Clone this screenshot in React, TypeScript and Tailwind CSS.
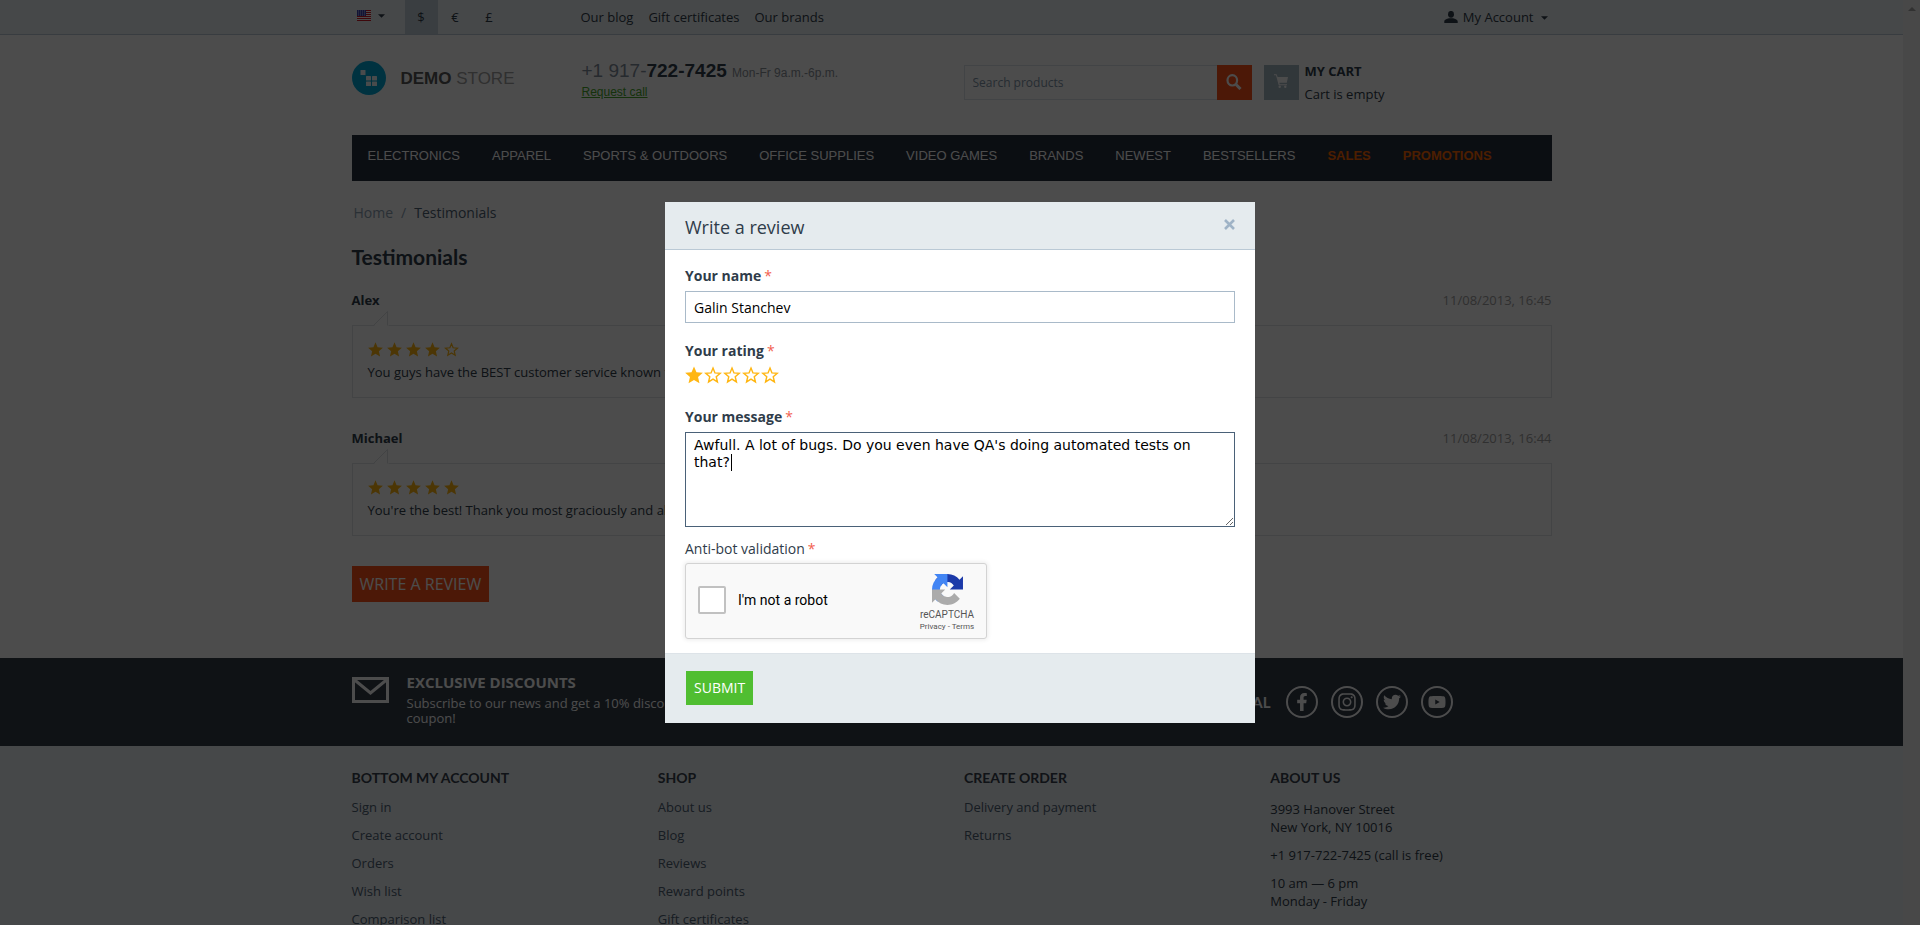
import React from "react";
import { FaFacebookF, FaInstagram, FaTwitter, FaYoutube } from "react-icons/fa";

const STAR = "12,.5 15.3,8.2 23.8,9 17.4,14.6 19.3,23 12,18.600 4.700,23 6.600,14.600 .2,9 8.700,8.200";

function Star({ filled, className }: { filled: boolean; className: string }) {
  return (
    <svg viewBox="0 0 24 24" className={className} aria-hidden="true">
      {filled ? (
        <polygon points={STAR} fill="#ffb612" />
      ) : (
        <polygon
          points="12,2.800 14.600,9.200 21.600,9.800 16.300,14.300 17.900,21.200 12,17.600 6.100,21.200 7.700,14.300 2.400,9.800 9.400,9.200"
          fill="none"
          stroke="#ffb612"
          strokeWidth="1.900"
        />
      )}
    </svg>
  );
}

function CaretDown() {
  return (
    <svg viewBox="0 0 8 4" className="h-1 w-[7px] fill-[#2f3c4a]" aria-hidden="true">
      <path d="M0 0h8L4 4z" />
    </svg>
  );
}

function Flag() {
  return (
    <svg viewBox="0 0 14 11" className="h-[11px] w-3.5" aria-label="English">
      <rect width="14" height="11" fill="#fff" />
      {[0, 2, 4, 6, 8, 10].map((y) => (
        <rect key={y} y={y} width="14" height="1" fill="#d01c2b" />
      ))}
      <rect width="9" height="6" fill="#3c45b5" />
      {[1, 3, 5].map((y) =>
        [1, 3, 5, 7].map((x) => <rect key={`${x}-${y}`} x={x} y={y - 0.5} width="1" height="1" fill="#c9cdf0" />)
      )}
    </svg>
  );
}

function TopBar() {
  return (
    <div className="border-b border-[#bccad6] bg-[#ebf0f3]">
      <div className="mx-auto grid h-[34px] max-w-[1200px] grid-cols-[229px_1fr_auto] items-center text-[13px] text-[#2f3c4a]">
        <div className="flex h-full items-center gap-px">
          <button className="flex w-[52px] items-center gap-[7px] pb-[3px] pl-[5px]" aria-label="Language">
            <Flag />
            <CaretDown />
          </button>
          <button className="h-full w-[33px] bg-[#c3d1da] pt-0.5">$</button>
          <button className="h-full w-[33px] pt-0.5">€</button>
          <button className="h-full w-[33px] pt-0.5">£</button>
        </div>
        <nav className="flex gap-[15px] pt-0.5">
          <a href="#blog">Our blog</a>
          <a href="#gift">Gift certificates</a>
          <a href="#brands">Our brands</a>
        </nav>
        <button className="flex items-center gap-[5px] pt-0.5 pr-1">
          <svg viewBox="0 0 14 12" className="mb-0.5 h-3 w-3.5 fill-[#2f3c4a]" aria-hidden="true">
            <ellipse cx="7" cy="3.3" rx="3" ry="3.4" />
            <path d="M.3 12V10.500C.3 8.600 3 8 4.900 7.300H9.100C11 8 13.700 8.600 13.700 10.500V12z" />
          </svg>
          <span className="pr-0.5">My Account</span>
          <CaretDown />
        </button>
      </div>
    </div>
  );
}

function Header() {
  return (
    <header className="grid h-[100px] grid-cols-[230px_382px_1fr] items-start pt-[25px]">
      <a href="#home" className="flex h-9 items-center gap-[15px] font-['Liberation_Sans',sans-serif] text-[17px]">
        <svg viewBox="0 0 34 34" className="size-[34px]" aria-hidden="true">
          <circle cx="17" cy="17" r="17" fill="#00a8d8" />
          <g fill="#f4fbfd">
            <rect x="8.500" y="9" width="5" height="5" rx="0.500" />
            <rect x="14" y="15" width="5" height="4.500" rx="0.500" />
            <rect x="20" y="15" width="5" height="4.500" rx="0.500" />
            <rect x="14" y="20.500" width="5" height="4.500" rx="0.500" />
            <rect x="20" y="20.500" width="5" height="4.500" rx="0.500" />
          </g>
        </svg>
        <span className="pt-0.5 text-[#a0a0a0]">
          <b className="text-[#585858]">DEMO</b> STORE
        </span>
      </a>
      <div className="font-['Liberation_Sans',sans-serif] text-xs">
        <div className="pt-px leading-5 text-[#8a8f98]">
          <span className="text-[19px] text-[#7f8c9b]">
            +1 917-<b className="text-[#2f3c4a]">722-7425</b>{" "}
          </span>
          Mon-Fr 9a.m.-6p.m.
        </div>
        <a href="#call" className="block leading-[18px] text-[#46a82a] underline">
          Request call
        </a>
      </div>
      <div className="flex pt-[5px]">
        <form className="flex h-[35px] w-72" onSubmit={(e) => e.preventDefault()}>
          <input
            type="text"
            aria-label="Search products"
            placeholder="Search products"
            className="min-w-0 flex-1 border border-r-0 border-[#dde4e9] px-2 text-xs placeholder:text-[#8195a8]"
          />
          <button className="flex w-[35px] items-center justify-center bg-[#ff5319]" aria-label="Search">
            <svg viewBox="0 0 16 16" className="mb-0.5 size-4" fill="none" stroke="#fff" aria-hidden="true">
              <ellipse cx="6.300" cy="6.300" rx="4.800" ry="5.200" strokeWidth="2.200" />
              <path d="M10 10.500L14.500 15" strokeWidth="3" />
            </svg>
          </button>
        </form>
        <a href="#cart" className="ml-3 flex size-[35px] items-center justify-center bg-[#a5b7c4]" aria-label="Cart">
          <svg viewBox="0 0 14 14" className="mb-1 size-3.5" fill="#fff" aria-hidden="true">
            <path d="M0 .2h2.600L3.600 3H14l-1.200 5.800H5.400l.3 1.400H13v1H4.700L2 1.200H0z" />
            <circle cx="5.700" cy="12.700" r="1.200" />
            <circle cx="11.300" cy="12.700" r="1.200" />
          </svg>
        </a>
        <div className="-mt-[5px] ml-1.5 text-[13px] leading-[23px] text-[#2f3c4a]">
          <div className="font-bold">MY CART</div>
          <div>Cart is empty</div>
        </div>
      </div>
    </header>
  );
}

const MENU = ["Electronics", "Apparel", "Sports & outdoors", "Office supplies", "Video games", "Brands", "Newest", "Bestsellers"];

function MainMenu() {
  return (
    <nav className="flex h-[46px] gap-8 bg-[#252f3e] px-4 pt-[11px] font-['Liberation_Sans',sans-serif] text-[13px] leading-5 text-white uppercase">
      {MENU.map((m) => (
        <a key={m} href="#menu">
          {m}
        </a>
      ))}
      <a href="#sales" className="font-bold text-[#ff6600]">
        Sales
      </a>
      <a href="#promotions" className="font-bold text-[#ff6600]">
        Promotions
      </a>
    </nav>
  );
}

function Review({ name, date, rating, text }: { name: string; date: string; rating: number; text: string }) {
  return (
    <article className="mb-[30px] text-[13px] leading-5 text-[#2f3c4a]">
      <div className="flex justify-between">
        <b>{name}</b>
        <time className="text-[#a0a0a0]">{date}</time>
      </div>
      <div className="relative mt-[15px] border border-[#e0e4e7] px-[15px] pt-4 pb-[15px]">
        <svg viewBox="0 0 16 16" className="absolute -top-[15px] left-5 size-4" aria-hidden="true">
          <path d="M.5 15.500L15.500 .5V15.500" fill="#fff" />
          <path d="M.5 14.500L14.500 .5V14.500" fill="none" stroke="#dde1e4" />
        </svg>
        <div className="flex h-5 items-start gap-1">
          {[1, 2, 3, 4, 5].map((n) => (
            <Star key={n} filled={n <= rating} className="size-[15px]" />
          ))}
        </div>
        <p>{text}</p>
      </div>
    </article>
  );
}

const SOCIAL = [
  { label: "Facebook", icon: <FaFacebookF size={18} /> },
  { label: "Instagram", icon: <FaInstagram size={20} /> },
  { label: "Twitter", icon: <FaTwitter size={18} /> },
  { label: "YouTube", icon: <FaYoutube size={18} /> },
];

function Band() {
  return (
    <section className="bg-[#323c49] text-white">
      <div className="mx-auto flex h-[88px] max-w-[1200px] justify-between">
        <div className="flex pt-3.5">
          <svg viewBox="0 0 37 26" className="mt-[5px] h-[26px] w-[37px]" fill="none" stroke="#fff" strokeWidth="3" aria-hidden="true">
            <rect x="1.500" y="1.500" width="34" height="23" />
            <path d="M2 2.500L18.500 16L35 2.500" />
          </svg>
          <div className="ml-[18px] max-w-[300px]">
            <h3 className="text-[15px] leading-5 font-bold">EXCLUSIVE DISCOUNTS</h3>
            <p className="mt-1 text-[13px] leading-[15px]">Subscribe to our news and get a 10% discount coupon!</p>
          </div>
        </div>
        <div className="flex items-center gap-[13px] pr-[99px]">
          <h3 className="pr-0.5 font-['Lato',sans-serif] text-[15px] font-bold">SOCIAL</h3>
          {SOCIAL.map((s) => (
            <a key={s.label} href="#social" aria-label={s.label} className="flex size-8 items-center justify-center rounded-full border-2 border-white">
              {s.icon}
            </a>
          ))}
        </div>
      </div>
    </section>
  );
}

const COLUMNS = [
  { title: "BOTTOM MY ACCOUNT", links: ["Sign in", "Create account", "Orders", "Wish list", "Comparison list"] },
  { title: "SHOP", links: ["About us", "Blog", "Reviews", "Reward points", "Gift certificates"] },
  { title: "CREATE ORDER", links: ["Delivery and payment", "Returns"] },
];

function Footer() {
  return (
    <footer className="bg-[#ebf0f3]">
      <div className="mx-auto grid max-w-[1200px] grid-cols-4 gap-[25px] pt-[22px] text-[13px]">
        {COLUMNS.map((c) => (
          <div key={c.title}>
            <h3 className="mb-[5px] font-['Lato',sans-serif] text-sm leading-5 font-bold text-[#38414d]">{c.title}</h3>
            <ul>
              {c.links.map((l) => (
                <li key={l} className="leading-7 text-[#4d6173]">
                  <a href="#link">{l}</a>
                </li>
              ))}
            </ul>
          </div>
        ))}
        <div className="leading-[18px] text-[#2f3c4a]">
          <h3 className="mb-3 font-['Lato',sans-serif] text-sm leading-5 font-bold text-[#38414d]">ABOUT US</h3>
          <p className="mb-2.5">
            3993 Hanover Street
            <br />
            New York, NY 10016
          </p>
          <p className="mb-2.5">+1 917-722-7425 (call is free)</p>
          <p className="mb-2.5">
            10 am — 6 pm
            <br />
            Monday - Friday
          </p>
        </div>
      </div>
    </footer>
  );
}

function Required() {
  return <span className="ml-[3px] font-normal text-[#f2604f]">*</span>;
}

function Captcha() {
  return (
    <div className="mt-1 flex h-[76px] w-[302px] items-center rounded-[3px] border border-[#d3d3d3] bg-[#f9f9f9] pb-0.5 pl-3 font-['Roboto',sans-serif] shadow-[0_0_4px_1px_rgba(0,0,0,0.08)]">
      <input id="robot" type="checkbox" className="size-7 appearance-none rounded-[2px] border-2 border-[#c1c1c1] bg-white" />
      <label htmlFor="robot" className="ml-3 flex-1 text-sm text-black">
        I'm not a robot
      </label>
      <div className="flex w-[78px] flex-col items-center pt-1.5 text-[#555]">
        <svg viewBox="0 0 64 64" className="size-[31px]" aria-hidden="true">
          <path fill="#1c3aa9" d="M64 31.955l-.033-1.370V4.687l-7.160 7.160C50.948 4.674 42.033.093 32.050.093c-10.400 0-19.622 4.960-25.458 12.640l11.736 11.860a15.550 15.550 0 0 1 4.754-5.334c2.050-1.600 4.952-2.906 8.968-2.906.485 0 .86.057 1.135.163 4.976.393 9.288 3.140 11.828 7.124l-8.307 8.307L64 31.953" />
          <path fill="#4285f4" d="M31.862.094l-1.370.033H4.594l7.160 7.160C4.580 13.147 0 22.060 0 32.046c0 10.400 4.960 19.622 12.640 25.458L24.500 45.768a15.550 15.550 0 0 1-5.334-4.754c-1.600-2.050-2.906-4.952-2.906-8.968 0-.485.057-.86.163-1.135.393-4.976 3.140-9.288 7.124-11.828l8.307 8.307L31.860.095" />
          <path fill="#ababab" d="M.001 32.045l.033 1.370v25.898l7.160-7.160c5.860 7.173 14.774 11.754 24.760 11.754 10.400 0 19.622-4.960 25.458-12.640l-11.736-11.860a15.550 15.550 0 0 1-4.754 5.334c-2.050 1.600-4.952 2.906-8.968 2.906-.485 0-.86-.057-1.135-.163-4.976-.393-9.288-3.140-11.828-7.124l8.307-8.307c-10.522.04-22.400.066-27.295-.005" />
        </svg>
        <span className="mt-[3px] text-[10px] leading-[13px]">reCAPTCHA</span>
        <span className="text-[8px] leading-3">
          <a href="#privacy">Privacy</a> - <a href="#terms">Terms</a>
        </span>
      </div>
    </div>
  );
}

function ReviewDialog() {
  return (
    <div className="fixed inset-0 flex items-center justify-center bg-black/70">
      <form
        role="dialog"
        aria-label="Write a review"
        className="w-full max-w-[590px] bg-white text-sm leading-5 text-[#2f3c4a]"
        onSubmit={(e) => e.preventDefault()}
      >
        <div className="flex h-12 items-center justify-between border-b border-[#bac9d5] bg-[#e5ebee] px-5">
          <h2 className="pt-0.5 text-[18px]">Write a review</h2>
          <button type="button" aria-label="Close" className="pb-0.5">
            <svg viewBox="0 0 11 11" className="size-[11px]" stroke="#9fb3c6" strokeWidth="2.600" aria-hidden="true">
              <path d="M1 1L10 10M10 1L1 10" />
            </svg>
          </button>
        </div>
        <div className="px-5 pt-4 pb-3.5">
          <label htmlFor="name" className="block font-bold">
            Your name
            <Required />
          </label>
          <input
            id="name"
            type="text"
            defaultValue="Galin Stanchev"
            className="mt-[5px] block h-8 w-full border border-[#a9bac9] px-2 text-black outline-none"
          />
          <fieldset className="mt-[18px]">
            <legend className="font-bold">
              Your rating
              <Required />
            </legend>
            <div className="mt-[5px] flex gap-px">
              {[1, 2, 3, 4, 5].map((n) => (
                <label key={n} className="block">
                  <input type="radio" name="rating" value={n} defaultChecked={n === 1} aria-label={`${n} stars`} className="sr-only" />
                  <Star filled={n === 1} className="size-[18px]" />
                </label>
              ))}
            </div>
          </fieldset>
          <label htmlFor="message" className="mt-[23px] block font-bold">
            Your message
            <Required />
          </label>
          <div className="relative mt-[5px]">
            <textarea
              id="message"
              defaultValue="Awfull. A lot of bugs. Do you even have QA's doing automated tests on that?"
              className="block h-[95px] w-full resize border border-[#4a6178] px-2 py-1 font-['DejaVu_Sans',sans-serif] text-sm leading-[17px] text-black outline-none"
            />
            <span className="absolute top-[22px] left-[46px] h-[17px] w-px bg-black" />
          </div>
          <div className="mt-3">
            Anti-bot validation
            <Required />
          </div>
          <Captcha />
        </div>
        <div className="border-t border-[#dde3e8] bg-[#e5ebee] px-[21px] pt-[17px] pb-[18px]">
          <button className="block h-[34px] bg-[#50be31] px-2 text-white">SUBMIT</button>
        </div>
      </form>
    </div>
  );
}

export default function App() {
  return (
    <div className="flex h-screen overflow-hidden bg-white font-['Open_Sans',sans-serif]">
      <div className="min-w-0 flex-1 overflow-hidden">
        <TopBar />
        <div className="mx-auto max-w-[1200px]">
          <Header />
          <MainMenu />
          <div className="mt-[22px] flex gap-2 pl-0.5 text-sm leading-5 text-[#8ca0b3]">
            <a href="#home">Home</a>
            <span>/</span>
            <span className="text-[#4d6173]">Testimonials</span>
          </div>
          <h1 className="mt-5 mb-[19px] font-['Lato',sans-serif] text-[21px] leading-7 font-bold text-[#2f3c4a]">Testimonials</h1>
          <Review name="Alex" date="11/08/2013, 16:45" rating={4} text="You guys have the BEST customer service known to man!" />
          <Review name="Michael" date="11/08/2013, 16:44" rating={5} text="You're the best! Thank you most graciously and always." />
          <button className="mb-14 block h-9 bg-[#ff5319] px-2 text-base text-white">WRITE A REVIEW</button>
        </div>
        <Band />
        <Footer />
      </div>
      <div className="flex w-[17px] justify-center bg-[#f1f1f1] pt-[7px]" aria-hidden="true">
        <svg viewBox="0 0 8 4" className="h-1 w-2 fill-[#a3a3a3]">
          <path d="M0 4h8L4 0z" />
        </svg>
      </div>
      <ReviewDialog />
    </div>
  );
}
